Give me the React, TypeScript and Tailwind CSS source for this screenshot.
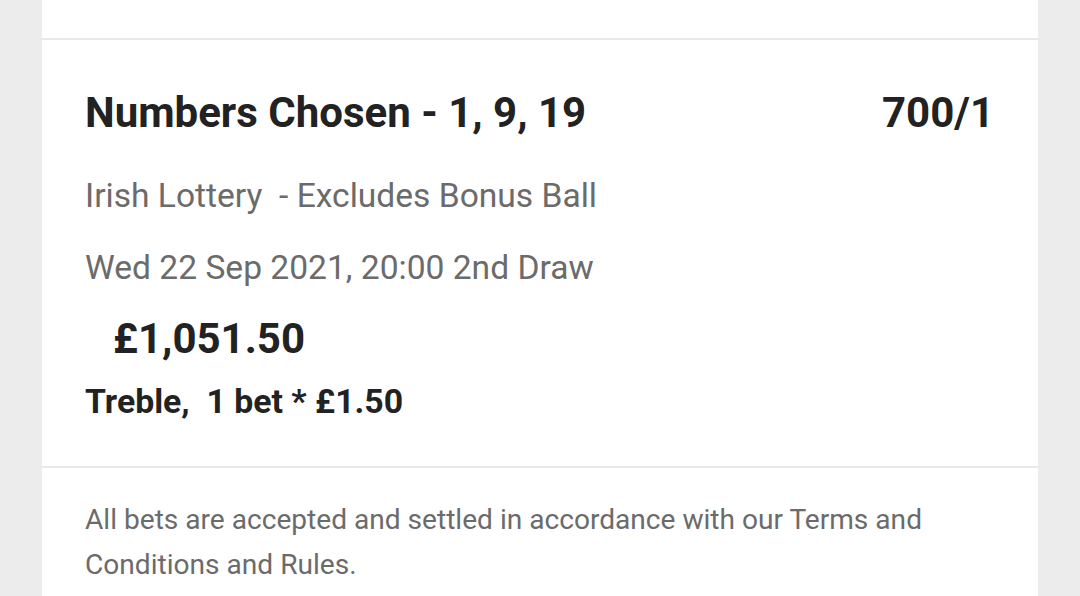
import React from 'react';

export default function App() {
  return (
    <div className="h-[596px] overflow-hidden bg-[#ebeceb] px-[42px] font-['Roboto',sans-serif]">
      <div className="bg-white min-h-full">
        {/* previous item */}
        <div className="h-[40px] border-b-2 border-[#e7e8e7]" />

        {/* bet details */}
        <div className="pl-[43px] pr-[44px] pt-[48px] pb-[44px] border-b-2 border-[#e7e8e7]">
          <div className="flex items-center justify-between h-[48px] text-[42px] font-bold text-[#222222]">
            <span>Numbers Chosen - 1, 9, 19</span>
            <span>700/1</span>
          </div>
          <div className="mt-[36px] h-[48px] leading-[48px] text-[33.6px] text-[#6b6b6b] whitespace-pre">
            {'Irish Lottery  - Excludes Bonus Ball'}
          </div>
          <div className="mt-[24px] h-[48px] leading-[48px] text-[33.6px] text-[#6b6b6b]">
            Wed 22 Sep 2021, 20:00 2nd Draw
          </div>
          <div className="mt-[23px] h-[48px] leading-[48px] pl-[28px] text-[42px] font-bold text-[#222222]">
            £1,051.50
          </div>
          <div className="mt-[19px] h-[40px] leading-[40px] text-[33.8px] font-bold text-[#222222] whitespace-pre">
            {'Treble,  1 bet * £1.50'}
          </div>
        </div>

        {/* footer */}
        <div className="pl-[43px] pr-[44px] pt-[29px] text-[28.1px] leading-[45px] text-[#6b6b6b]">
          All bets are accepted and settled in accordance with our Terms and Conditions and Rules.
        </div>
      </div>
    </div>
  );
}
